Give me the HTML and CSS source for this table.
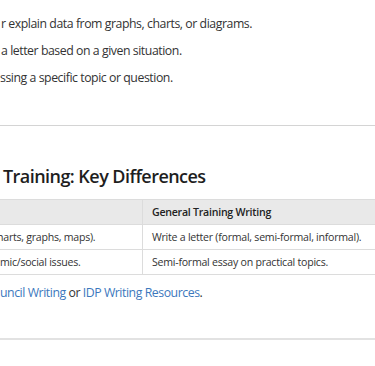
FILE: index.html
```html
<!DOCTYPE html>
<html lang="en">
<head>
<meta charset="utf-8">
<title>IELTS Writing</title>
<link rel="stylesheet" href="styles.css">
</head>
<body>
<div class="page">
  <ul class="tasks">
    <li class="t1">r explain data from graphs, charts, or diagrams.</li>
    <li class="t2">a letter based on a given situation.</li>
    <li class="t3">ssing a specific topic or question.</li>
  </ul>
  <hr class="rule">
  <h2 class="title">Training: Key Differences</h2>
  <table class="diff">
    <thead>
      <tr><th class="c1"></th><th class="c2">General Training Writing</th></tr>
    </thead>
    <tbody>
      <tr><td class="c1"><span class="cut">harts, graphs, maps).</span></td><td class="c2">Write a letter (formal, semi-formal, informal).</td></tr>
      <tr><td class="c1">mic/social issues.</td><td class="c2">Semi-formal essay on practical topics.</td></tr>
    </tbody>
  </table>
  <p class="more"><a href="#">uncil Writing</a> or <a href="#">IDP Writing Resources</a>.</p>
  <hr class="rule bottom">
</div>
</body>
</html>
```
FILE: styles.css
```css
html, body {
  margin: 0;
  padding: 0;
  background: #fff;
}
.page {
  width: 375px;
  height: 366px;
  overflow: hidden;
  font-family: "Open Sans", "Noto Sans", sans-serif;
  color: #333;
}
.tasks {
  list-style: none;
  margin: 0;
  padding: 10px 0 0 0;
  font-size: 12.3px;
  letter-spacing: -0.45px;
  line-height: 27px;
  white-space: nowrap;
}
.tasks li { padding-left: 1px; }
.tasks .t3 { padding-left: 0; }
.rule {
  border: 0;
  border-top: 1px solid #d4d4d4;
  height: 0;
  margin: 34px 0 0 0;
}
.title {
  margin: 36px 0 0 0;
  padding-left: 3px;
  font-size: 18px;
  letter-spacing: -0.55px;
  line-height: 28px;
  font-weight: 600;
  color: #1e1e1e;
  white-space: nowrap;
}
.diff {
  margin-top: 9px;
  border-collapse: collapse;
  width: 420px;
  font-size: 10.6px;
  letter-spacing: -0.25px;
  white-space: nowrap;
}
.diff th, .diff td {
  height: 24px;
  padding: 0 0 0 9px;
  text-align: left;
  border-top: 1px solid #dcdcdc;
  border-bottom: 1px solid #dcdcdc;
  color: #333;
}
.diff th {
  background: #e9e9e9;
  font-weight: 600;
  color: #222;
}
.diff .c1 {
  width: 142px;
  padding-left: 0;
  border-right: 1px solid #dcdcdc;
}
.cut { margin-left: -3px; }
.more {
  margin: 8px 0 0 0;
  font-size: 12.3px;
  letter-spacing: -0.45px;
  line-height: 20px;
  white-space: nowrap;
}
.more a {
  color: #3c78bd;
  text-decoration: none;
}
.bottom {
  margin-top: 35px;
  border-top: 2px solid #e2e2e2;
}
```
